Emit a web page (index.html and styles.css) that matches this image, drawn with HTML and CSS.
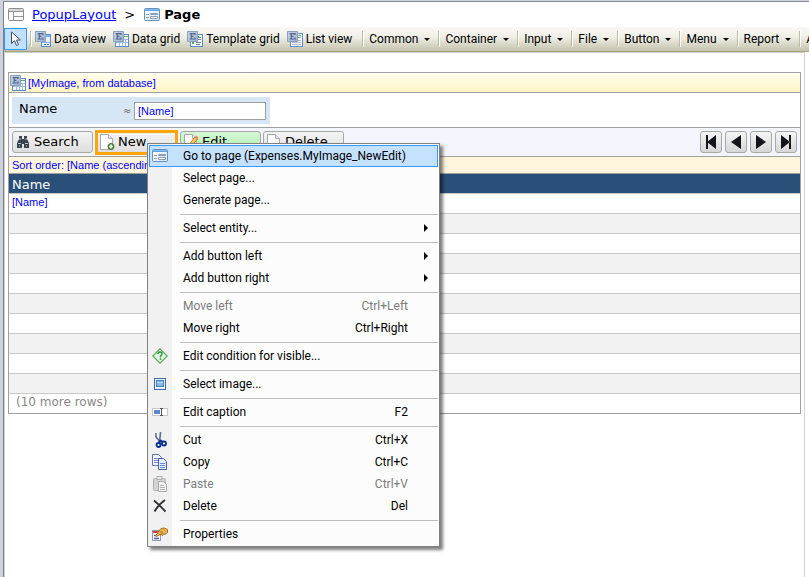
FILE: index.html
```html
<!DOCTYPE html>
<html lang="en">
<head>
<meta charset="utf-8">
<title>Page</title>
<link rel="stylesheet" href="styles.css">
</head>
<body>
<svg class="defs" aria-hidden="true">
  <defs>
    <linearGradient id="sky" x1="0" y1="0" x2="1" y2="1"><stop offset="0" stop-color="#fff"/><stop offset="1" stop-color="#cfe4f6"/></linearGradient>
    <linearGradient id="bar" x1="0" y1="0" x2="0" y2="1"><stop offset="0" stop-color="#8cc8f8"/><stop offset="1" stop-color="#4c98e0"/></linearGradient>
    <linearGradient id="cell" x1="0" y1="0" x2="1" y2="1"><stop offset="0" stop-color="#ccd8e8"/><stop offset="1" stop-color="#9cb2d0"/></linearGradient>
  </defs>
  <symbol id="entity" viewBox="0 0 16 16">
    <path fill="url(#cell)" stroke="#8ca0bc" d="M.5.5h10v10H.5z"/>
    <path fill="none" stroke="#50668c" stroke-width="1.200" d="M2.500 2.600H8V4M4.200 2.500v5.500M2.500 8H8V6.500M4 5.300h2.500"/>
  </symbol>
  <symbol id="page" viewBox="0 0 16 14">
    <rect x=".5" y=".5" width="15" height="12" rx="1" fill="url(#sky)" stroke="#6890b8"/>
    <path fill="url(#bar)" d="M1 1h14v2H1z"/>
    <path stroke="#8ca0b4" fill="none" d="M2 6.500h3M2 9.500h3"/>
    <path stroke="#8ca0b4" fill="#fff" d="M6.500 5.500h7v1h-7zM6.500 8.500h7v2h-7z"/>
  </symbol>
  <symbol id="sheet" viewBox="0 0 16 16">
    <path fill="#fdfdfd" stroke="#a8a8a8" d="M1.500.5h8l4 4v11h-12z"/>
    <path fill="#e4e4e4" stroke="#b0b0b0" d="M9.500.5v4h4"/>
  </symbol>
</svg>

<div class="editor">
  <header class="crumbs">
    <svg class="i16" viewBox="0 0 16 14"><rect x=".5" y=".5" width="15" height="12" rx="1" fill="#fff" stroke="#8c8c8c"/><path d="M1 1h14v2H1z" fill="#d8d8d8"/><path d="M1 3.500h14M5.500 4v9M6 8.500h9" stroke="#949494" fill="none"/></svg>
    <a href="#">PopupLayout</a><span class="gt">&gt;</span>
    <svg class="i16"><use href="#page"/></svg><strong>Page</strong>
  </header>

  <nav class="toolbar">
    <button class="pointer" aria-label="Select"><svg width="12" height="16" viewBox="0 0 12 16"><path d="M1.500 1v11.500l3-2.800 2 4.800 2-1-2-4.500h4z" fill="#fff" stroke="#40506c"/></svg></button>
    <i class="sep"></i>
    <button class="tool"><svg viewBox="0 0 16 16"><rect x="6.500" y="3.500" width="9" height="12" fill="#e8f2ff" stroke="#588cd0"/><path d="M7 4h8v2H7zM7 11h8v1H7z" fill="#80b0e8"/><path d="M9 13.500h2M12 13.500h2" stroke="#3870b8"/><use href="#entity"/></svg>Data view</button>
    <button class="tool"><svg viewBox="0 0 16 16"><rect x="2.500" y="3.500" width="13" height="12" fill="#fff" stroke="#588cd0"/><path d="M10 5.500h5" stroke="#60b060"/><path d="M3 8.500h12M3 11.500h12M6.500 8v7M9.500 8v7M12.500 8v7" stroke="#98bce4"/><use href="#entity"/></svg>Data grid</button>
    <button class="tool"><svg viewBox="0 0 16 16"><rect x="3.500" y="3.500" width="12" height="12" fill="#fff" stroke="#588cd0"/><path d="M5 11h2v2H5zM11 5h1v2h-1z" fill="#50a850"/><path d="M12 6.500h2M11 8.500h3M9 11.500h5M9 13.500h4" stroke="#708098"/><use href="#entity"/></svg>Template grid</button>
    <button class="tool"><svg viewBox="0 0 16 16"><rect x="3.500" y="2.500" width="12" height="13" fill="#fff" stroke="#588cd0"/><path d="M10 4.500h4M10 6.500h4" stroke="#70b070"/><path d="M5 11.500h9M5 13.500h9M10 9.500h4" stroke="#a8b8c8"/><use href="#entity"/></svg>List view</button>
    <i class="sep"></i><button class="drop">Common</button>
    <i class="sep"></i><button class="drop">Container</button>
    <i class="sep"></i><button class="drop">Input</button>
    <i class="sep"></i><button class="drop">File</button>
    <i class="sep"></i><button class="drop">Button</button>
    <i class="sep"></i><button class="drop">Menu</button>
    <i class="sep"></i><button class="drop">Report</button>
    <i class="sep"></i><button class="drop">A</button>
  </nav>

  <main class="canvas">
    <section class="grid">
      <div class="source"><svg viewBox="0 0 16 16"><rect x="2.500" y="3.500" width="13" height="12" fill="#fff" stroke="#588cd0"/><path d="M10 5.500h5" stroke="#60b060"/><path d="M3 8.500h12M3 11.500h12M6.500 8v7M9.500 8v7M12.500 8v7" stroke="#98bce4"/><use href="#entity"/></svg>[MyImage, from database]</div>
      <div class="search">
        <div class="field"><label for="name">Name</label><span class="approx">≈</span><input id="name" value="[Name]"></div>
      </div>
      <div class="actions">
        <button class="btn"><svg viewBox="0 0 16 16"><path d="M4 2h3v3h2V2h3v3l2 4v5H9v-4H7v4H2V9l2-4z" fill="#38444e"/><path d="M3 9.500h3M10 9.500h3M5 4v2M11 4v2M4 12h1M11 12h1" stroke="#b8c4cc"/></svg>Search</button>
        <button class="btn selected"><svg viewBox="0 0 16 16"><use href="#sheet"/><circle cx="12" cy="12.500" r="3" fill="#5c9440" stroke="#3f7428"/><path d="M10 12.500h4M12 10.500v4" stroke="#fff" stroke-width="1.400"/></svg>New</button>
        <button class="btn green"><svg viewBox="0 0 16 16"><use href="#sheet"/><path d="M5.500 11.500L12 3l2.500 2L8 13l-3 1z" fill="#f8c850" stroke="#b8843c"/><path d="M12 3l1-1.500 2.500 2L14.500 5z" fill="#e88870"/></svg>Edit</button>
        <button class="btn"><svg viewBox="0 0 16 16"><use href="#sheet"/></svg>Delete</button>
        <div class="pager">
          <button aria-label="First"><svg viewBox="0 0 12 14"><path d="M1 0h2v14H1zM11 0v14L2 7z"/></svg></button>
          <button aria-label="Previous"><svg viewBox="0 0 12 14"><path d="M11 0v14L1 7z"/></svg></button>
          <button aria-label="Next"><svg viewBox="0 0 12 14"><path d="M1 0v14l10-7z"/></svg></button>
          <button aria-label="Last"><svg viewBox="0 0 12 14"><path d="M9 0h2v14H9zM1 0v14l9-7z"/></svg></button>
        </div>
      </div>
      <div class="sort">Sort order: [Name (ascending)]</div>
      <table>
        <thead><tr><th>Name</th></tr></thead>
        <tbody>
          <tr><td class="attr">[Name]</td></tr>
          <tr><td></td></tr><tr><td></td></tr><tr><td></td></tr><tr><td></td></tr>
          <tr><td></td></tr><tr><td></td></tr><tr><td></td></tr><tr><td></td></tr><tr><td></td></tr>
          <tr><td class="more">(10 more rows)</td></tr>
        </tbody>
      </table>
    </section>
  </main>
</div>

<div class="menu" role="menu">
  <button class="item hot" role="menuitem"><svg viewBox="0 0 16 14"><use href="#page"/></svg>Go to page (Expenses.MyImage_NewEdit)</button>
  <button class="item" role="menuitem">Select page...</button>
  <button class="item" role="menuitem">Generate page...</button>
  <hr>
  <button class="item sub" role="menuitem">Select entity...</button>
  <hr>
  <button class="item sub" role="menuitem">Add button left</button>
  <button class="item sub" role="menuitem">Add button right</button>
  <hr>
  <button class="item" role="menuitem" disabled>Move left<kbd>Ctrl+Left</kbd></button>
  <button class="item" role="menuitem">Move right<kbd>Ctrl+Right</kbd></button>
  <hr>
  <button class="item" role="menuitem"><svg viewBox="0 0 16 16"><path d="M8 .8L15.200 8 8 15.200.8 8z" fill="#e4f6e4" stroke="#58a860" stroke-width="1.200"/><path d="M6 6q0-2 2-2t2 2q0 1-1.500 2v1.500M8.500 10.500v1.500" fill="none" stroke="#389040" stroke-width="1.500"/></svg>Edit condition for visible...</button>
  <hr>
  <button class="item" role="menuitem"><svg viewBox="0 0 16 16"><rect x="2.500" y="2.500" width="11" height="11" fill="#e8f2fc" stroke="#3c68a8"/><rect x="4.500" y="4.500" width="7" height="6" fill="#80b8e0" stroke="#4c80b8"/><path d="M5 6.500h6" stroke="#b8e0f4"/></svg>Select image...</button>
  <hr>
  <button class="item" role="menuitem"><svg viewBox="0 0 16 16"><rect x=".5" y="4.500" width="15" height="7" fill="#fff" stroke="#c8c8c8"/><path d="M2 6h6v4H2z" fill="#5888d0"/><path d="M8 4.500h3M8 11.500h3M9.500 5v6" stroke="#555"/></svg>Edit caption<kbd>F2</kbd></button>
  <hr>
  <button class="item" role="menuitem"><svg viewBox="0 0 16 16"><path d="M4 1v4l5 6M8.500 0L8 6l-1 4" fill="none" stroke="#60708c" stroke-width="1.600"/><circle cx="6.500" cy="13" r="2" fill="#fff" stroke="#082c90" stroke-width="1.800"/><circle cx="12" cy="11.500" r="2" fill="#fff" stroke="#082c90" stroke-width="1.800"/><path d="M6.500 11l2-2.500 2.500 1.500" fill="none" stroke="#082c90" stroke-width="1.800"/></svg>Cut<kbd>Ctrl+X</kbd></button>
  <button class="item" role="menuitem"><svg viewBox="0 0 16 16"><path d="M.5.5h6l3 3v8h-9z" fill="#f0f4ff" stroke="#6870b8"/><path d="M2 4.500h5M2 6.500h5M2 8.500h5" stroke="#7888d0"/><path d="M6.500 4.500h5l3 3v8h-8z" fill="#e0ecff" stroke="#5058a0"/><path d="M8 9.500h5M8 11.500h5M8 13.500h5" stroke="#6888d8"/></svg>Copy<kbd>Ctrl+C</kbd></button>
  <button class="item" role="menuitem" disabled><svg viewBox="0 0 16 16"><rect x="1.500" y="2.500" width="12" height="12" rx="1" fill="#d4d4d4" stroke="#b0b0b0"/><path d="M5 .5h5v3H5z" fill="#eee" stroke="#aaa"/><path d="M6.500 5.500h5l3 3v7h-8z" fill="#f4f4f4" stroke="#a8a8a8"/><path d="M8 9.500h4M8 11.500h5M8 13.500h5" stroke="#b0b0b0"/></svg>Paste<kbd>Ctrl+V</kbd></button>
  <button class="item" role="menuitem"><svg viewBox="0 0 16 16"><path d="M2 2.500q5 4 11.500 11M13 2Q7 6 2.500 13.500" fill="none" stroke="#303034" stroke-width="1.900"/></svg>Delete<kbd>Del</kbd></button>
  <hr>
  <button class="item" role="menuitem"><svg viewBox="0 0 16 16"><rect x=".5" y="4.500" width="8" height="10" fill="#fff" stroke="#8898b0"/><path d="M1 5h7v2H1z" fill="#d84040"/><path d="M2 9.500h2M2 12.500h5" stroke="#4058a8" stroke-width="1.400"/><path d="M3.500 10L7 5l2-2.500 3.500-.5 3 1.500v3L13 8.500l-1.500-.5-1 1.500-1.500-1-2 .5-2.500 1.500z" fill="#e8b050" stroke="#a87020"/><path d="M8 6h3M9 8l2-1" stroke="#a87020" stroke-width=".8"/></svg>Properties</button>
</div>
</body>
</html>
```
FILE: styles.css
```css
* { box-sizing: border-box; }
body {
  margin: 0;
  padding: 1px 0 0 3px;
  min-height: 100vh;
  background: #cdd1de;
  font: 13px/18px "DejaVu Sans", sans-serif;
  color: #000;
  overflow: hidden;
}
button, input { font: inherit; color: inherit; margin: 0; padding: 0; border: 0; background: none; }
svg { flex: none; }
.defs { position: absolute; width: 0; height: 0; }
.editor {
  min-height: calc(100vh - 1px);
  display: flex;
  flex-direction: column;
  border-top: 1px solid #888c94;
  border-left: 1px solid #808084;
  background: #fff;
}
.crumbs { display: flex; align-items: center; height: 25px; padding-left: 4px; }
.i16 { width: 16px; height: 14px; }
.crumbs a { margin-left: 8px; color: #00f; }
.gt { margin: 0 9px 0 8px; }
.crumbs strong { margin-left: 4px; }

.toolbar {
  display: flex;
  align-items: center;
  height: 25px;
  border-bottom: 1px solid #a5a57c;
  background: linear-gradient(#faf9f6, #eeede4 45%, #c4c3ac);
  font: 12px/16px Roboto, sans-serif;
  white-space: nowrap;
  overflow: hidden;
}
.toolbar button { flex: none; }
.pointer {
  width: 23px;
  height: 22px;
  border: 1px solid #3399ff;
  background: #c2e0ff;
  display: flex;
  align-items: center;
  justify-content: center;
}
.sep { flex: none; width: 2px; height: 16px; margin: 0 3px; background: linear-gradient(90deg, #bdbda0 50%, #fff 50%); }
.tool { display: flex; align-items: center; gap: 3px; margin-right: 7px; }
.tool svg, .source svg { width: 16px; height: 16px; }
.drop { display: flex; align-items: center; padding: 0 5px 0 2px; }
.drop::after {
  content: "";
  margin-left: 6px;
  border: 3px solid transparent;
  border-top-color: #000;
  border-bottom: 0;
}

.canvas { flex: 1; margin-right: 4px; padding: 19px 3px 0; border: solid #d0d0d0; border-width: 1px 1px 0; }
.grid { border: 1px solid #a0a0a0; }
.source, .attr, .sort, .field input { font: 11px/16px "Liberation Sans", sans-serif; color: #00f; }
.source {
  display: flex;
  align-items: center;
  gap: 2px;
  height: 20px;
  padding-left: 1px;
  border-bottom: 1px solid #a0a0a0;
  background: linear-gradient(#fffef0, #fff4c4);
}
.search { padding: 4px 3px 3px; border-bottom: 1px solid #a0a0a0; }
.field {
  display: flex;
  align-items: center;
  width: 258px;
  height: 27px;
  padding: 0 4px 0 7px;
  background: #d6e6f4;
}
.field label { flex: 1; padding-bottom: 4px; }
.approx { width: 11px; font-size: 10px; color: #666; }
.field input { width: 132px; height: 18px; padding: 0 3px; border: 1px solid #a0a0a0; background: #fff; }

.actions { display: flex; align-items: center; gap: 2px; height: 29px; padding: 0 3px; border-bottom: 1px solid #a0a0a0; background: #f4f4fd; }
.btn {
  display: flex;
  align-items: center;
  gap: 3px;
  width: 81px;
  height: 22px;
  padding-left: 2px;
  border: 1px solid #a8a8a8;
  border-radius: 3px;
  background: linear-gradient(#f4f4f4, #dedede);
}
.btn svg { width: 16px; height: 16px; }
.selected { width: 83px; height: 25px; padding-left: 1px; border: 3px solid #ffa50a; border-radius: 0; }
.green { background: linear-gradient(#d8f8d8, #a8eca8); }
.pager { display: flex; gap: 3px; margin-left: auto; }
.pager button {
  display: flex;
  align-items: center;
  justify-content: center;
  width: 22px;
  height: 22px;
  border: 1px solid #a8a8a8;
  border-radius: 3px;
  background: linear-gradient(#f6f6f6, #d6d6d6);
}
.pager svg { width: 12px; height: 14px; fill: #14141c; }
.sort { height: 17px; padding-left: 3px; border-bottom: 1px solid #a0a0a0; background: #fff5dc; }

table { width: 100%; border-collapse: collapse; }
th { height: 19px; padding: 2px 3px 0; line-height: 17px; background: #2a5079; color: #fff; font-weight: 400; text-align: left; }
td { height: 20px; padding: 0 3px; border-top: 1px solid #c8c8c8; }
tbody tr:nth-child(even) { background: #f2f2f2; }
td.attr { padding-bottom: 3px; }
td.more { height: 19px; padding: 0 7px 2px; font-size: 12px; line-height: 16px; color: #888; }

.menu {
  position: absolute;
  left: 147px;
  top: 143px;
  width: 293px;
  padding: 1px;
  border: 1px solid #808080;
  background: linear-gradient(90deg, #f1f1f1 24px, #fcfcfc 24px);
  box-shadow: 3px 3px 3px rgba(0, 0, 0, .5);
  font: 12px/16px Roboto, sans-serif;
}
.item {
  display: flex;
  align-items: center;
  width: 100%;
  height: 22px;
  padding: 0 30px 0 34px;
  text-align: left;
  white-space: nowrap;
}
.item svg { width: 16px; height: 16px; margin: 0 15px 0 -31px; }
.item:disabled { color: #7c7c7c; }
.hot { background: #c4e1ff; box-shadow: inset 0 0 0 1px #3399ff; }
.item kbd { font: inherit; margin-left: auto; }
.sub::after {
  content: "";
  margin: 0 -20px 0 auto;
  border: 4px solid transparent;
  border-left-color: #000;
  border-right: 0;
}
.menu hr { height: 1px; margin: 3px 0 2px 31px; border: 0; background: #bdbdbd; }
```
